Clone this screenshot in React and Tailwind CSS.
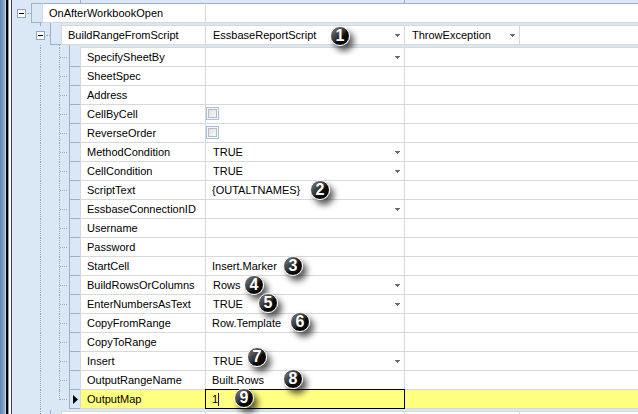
import React from "react";

const PROPERTIES = [
  { name: "SpecifySheetBy", kind: "select", value: "" },
  { name: "SheetSpec", kind: "text", value: "" },
  { name: "Address", kind: "text", value: "" },
  { name: "CellByCell", kind: "check" },
  { name: "ReverseOrder", kind: "check" },
  { name: "MethodCondition", kind: "select", value: "TRUE" },
  { name: "CellCondition", kind: "select", value: "TRUE" },
  { name: "ScriptText", kind: "text", value: "{OUTALTNAMES}", badge: 2, spot: "left-[104px] -top-px" },
  { name: "EssbaseConnectionID", kind: "select", value: "" },
  { name: "Username", kind: "text", value: "" },
  { name: "Password", kind: "text", value: "" },
  { name: "StartCell", kind: "text", value: "Insert.Marker", badge: 3, spot: "left-[77px] -top-px" },
  { name: "BuildRowsOrColumns", kind: "select", value: "Rows", badge: 4, spot: "left-[38px] -top-px" },
  { name: "EnterNumbersAsText", kind: "select", value: "TRUE", badge: 5, spot: "left-[52px] -top-[2px]" },
  { name: "CopyFromRange", kind: "text", value: "Row.Template", badge: 6, spot: "left-[84px] -top-[2px]" },
  { name: "CopyToRange", kind: "text", value: "" },
  { name: "Insert", kind: "select", value: "TRUE", badge: 7, spot: "left-[41px] -top-[5px]" },
  { name: "OutputRangeName", kind: "text", value: "Built.Rows", badge: 8, spot: "left-[77px] -top-[2px]" },
  { name: "OutputMap", kind: "active", value: "1", badge: 9, spot: "left-[28px] -top-[2px]" },
];

function Badge({ n, spot }) {
  return (
    <span
      className={`pointer-events-none absolute z-20 flex size-5 items-center justify-center rounded-full border border-[#f4f4f4] bg-linear-to-br from-[#626262] from-20% via-[#2c2c2c] via-50% to-[#0a0a0a] to-60% text-[16px] leading-none font-bold text-white shadow-[4px_5px_6px_rgba(0,0,0,0.65)] ${spot}`}
    >
      {n}
    </span>
  );
}

function Expander({ label }) {
  return (
    <button
      type="button"
      aria-label={label}
      className="flex size-[9px] shrink-0 items-center justify-center border border-[#8fa5c9] bg-white"
    >
      <span className="h-px w-[5px] bg-black" />
    </button>
  );
}

function Dropdown({ label, value }) {
  return (
    <div className="grid h-[18px] items-center">
      <select
        aria-label={label}
        defaultValue={value}
        className="col-start-1 row-start-1 h-[18px] w-full appearance-none bg-transparent pl-[7px] outline-none"
      >
        <option value={value}>{value}</option>
      </select>
      <svg
        viewBox="0 0 5 3"
        className="pointer-events-none col-start-1 row-start-1 mr-1 h-[3px] w-[5px] justify-self-end"
        shapeRendering="crispEdges"
      >
        <path d="M0 0h5v1H4v1H3v1H2V2H1V1H0z" fill="#6b6b6b" />
      </svg>
    </div>
  );
}

function Value({ item }) {
  if (item.kind === "select") return <Dropdown label={item.name} value={item.value} />;
  if (item.kind === "check")
    return (
      <div className="flex h-[18px] items-start pt-0.5">
        <input
          type="checkbox"
          aria-label={item.name}
          className="size-[13px] appearance-none border border-[#a9bfe0] bg-linear-to-br from-[#dcdfe4] to-[#fafafa] shadow-[inset_0_0_0_1px_#f4f8fd,inset_0_0_0_2px_#b7bbc3]"
        />
      </div>
    );
  if (item.kind === "active")
    return (
      <div className="relative z-10 flex h-[18px] items-center pl-1.5 outline outline-1 outline-black">
        <input aria-label={item.name} defaultValue={item.value} className="w-1.5 bg-transparent outline-none" />
        <span className="h-[13px] w-px bg-[#10108a]" />
      </div>
    );
  return (
    <input
      aria-label={item.name}
      defaultValue={item.value}
      className="block h-[18px] w-full bg-transparent pl-1.5 outline-none"
    />
  );
}

function PropertyRow({ item }) {
  const active = item.kind === "active";
  const fill = active ? "bg-[#ffff80]" : "bg-white";
  return (
    <tr>
      <td className="h-[19px] p-0">
        <div className="flex h-[19px]">
          <div className="ml-7 w-[19px] border-l border-dotted border-[#98a8bf]" />
          <div className={`w-2 border-l border-dotted border-[#98a8bf] ${active ? "h-2.5" : ""}`}>
            <div className="mt-[9px] border-t border-dotted border-[#98a8bf]" />
          </div>
        </div>
      </td>
      <td className="border-b border-l border-[#9db0d0] p-0">
        {active && (
          <svg viewBox="0 0 5 9" className="mx-auto h-[9px] w-[5px]">
            <path d="M0 0L5 4.5L0 9z" fill="#000" />
          </svg>
        )}
      </td>
      <th
        scope="row"
        className={`border-r border-b border-l border-[#d8d8d8] py-0 pl-1.5 text-left font-normal whitespace-nowrap ${fill}`}
      >
        {item.name}
      </th>
      <td className={`relative border-r border-b border-[#d8d8d8] p-0 ${fill}`}>
        <Value item={item} />
        {item.badge && <Badge n={item.badge} spot={item.spot} />}
      </td>
      <td className={`border-b border-[#d8d8d8] p-0 ${fill}`} />
    </tr>
  );
}

export default function App() {
  return (
    <div className="flex h-screen overflow-hidden bg-[#dae7f5] font-['Liberation_Sans',Arial,sans-serif] text-[11px] leading-[13px] text-black">
      <div className="flex w-3 shrink-0">
        <div className="w-[5px] bg-linear-to-r from-[#6583b0] to-[#8fabd3]" />
        <div className="w-px bg-[#c4d7ee]" />
        <div className="w-0.5 bg-black" />
        <div className="w-px bg-[#9a9a9a]" />
        <div className="w-0.5 bg-white" />
        <div className="w-px bg-[#39405a]" />
      </div>

      <main className="min-w-0 flex-1">
        <div className="flex h-[3px]">
          <div className="w-[69px] border-r border-[#9db0d0]" />
          <div className="w-[324px] border-r border-[#9db0d0]" />
        </div>

        <div className="flex h-5">
          <div className="flex w-[19px] items-center pl-[5px]">
            <Expander label="Collapse OnAfterWorkbookOpen" />
            <span className="ml-px w-1 border-t border-dotted border-[#98a8bf]" />
          </div>
          <div className="w-[11px] border-t border-b border-l border-[#9db0d0]" />
          <div className="flex w-[164px] items-center border-t border-r border-b border-l border-[#d8d8d8] border-t-[#9db0d0] bg-white pl-1.5">
            OnAfterWorkbookOpen
          </div>
          <div className="flex-1 border-t border-b border-[#d8d8d8] border-t-[#9db0d0] bg-white" />
        </div>

        <div className="flex h-0.5">
          <div className="ml-7 w-2.5 border-l border-dotted border-[#98a8bf]" />
          <div className="border-l border-[#9db0d0]" />
        </div>

        <div className="flex h-5">
          <div className="flex w-[38px] items-center pl-6">
            <Expander label="Collapse BuildRangeFromScript" />
            <span className="ml-px w-1 border-t border-dotted border-[#98a8bf]" />
          </div>
          <div className="w-[11px] border-b border-l border-[#9db0d0]" />
          <div className="flex w-[145px] items-center border border-[#d8d8d8] bg-white pl-1.5">
            BuildRangeFromScript
          </div>
          <div className="relative w-[199px] border-t border-r border-b border-[#d8d8d8] bg-white">
            <Dropdown label="BuildRangeFromScript" value="EssbaseReportScript" />
            <Badge n={1} spot="left-[124px] top-0" />
          </div>
          <div className="w-[115px] border-t border-r border-b border-[#d8d8d8] bg-white">
            <Dropdown label="Error handling" value="ThrowException" />
          </div>
          <div className="flex-1 border-t border-b border-[#d8d8d8] bg-white" />
        </div>

        <div className="flex h-[3px]">
          <div className="ml-7 w-[19px] border-l border-dotted border-[#98a8bf]" />
          <div className="w-2.5 border-l border-dotted border-[#98a8bf]" />
          <div className="w-[11px] border-l border-[#9db0d0]" />
          <div className="mt-0.5 flex-1 bg-[#d8d8d8]" />
        </div>

        <table className="w-full table-fixed border-separate border-spacing-0">
          <colgroup>
            <col className="w-[57px]" />
            <col className="w-[11px]" />
            <col className="w-[126px]" />
            <col className="w-[199px]" />
            <col />
          </colgroup>
          <tbody>
            {PROPERTIES.map((item) => (
              <PropertyRow key={item.name} item={item} />
            ))}
          </tbody>
        </table>

        <div className="flex h-[5px]">
          <div className="ml-7 w-2.5 border-l border-dotted border-[#98a8bf]" />
          <div className="mt-px w-[11px] border-l border-[#9db0d0]" />
          <div className="mt-0.5 w-[145px] border-t border-r border-l border-[#d8d8d8] bg-white" />
          <div className="mt-0.5 w-[199px] border-t border-r border-[#d8d8d8] bg-white" />
          <div className="mt-0.5 w-[115px] border-t border-r border-[#d8d8d8] bg-white" />
          <div className="mt-0.5 flex-1 border-t border-[#d8d8d8] bg-white" />
        </div>
      </main>
    </div>
  );
}
